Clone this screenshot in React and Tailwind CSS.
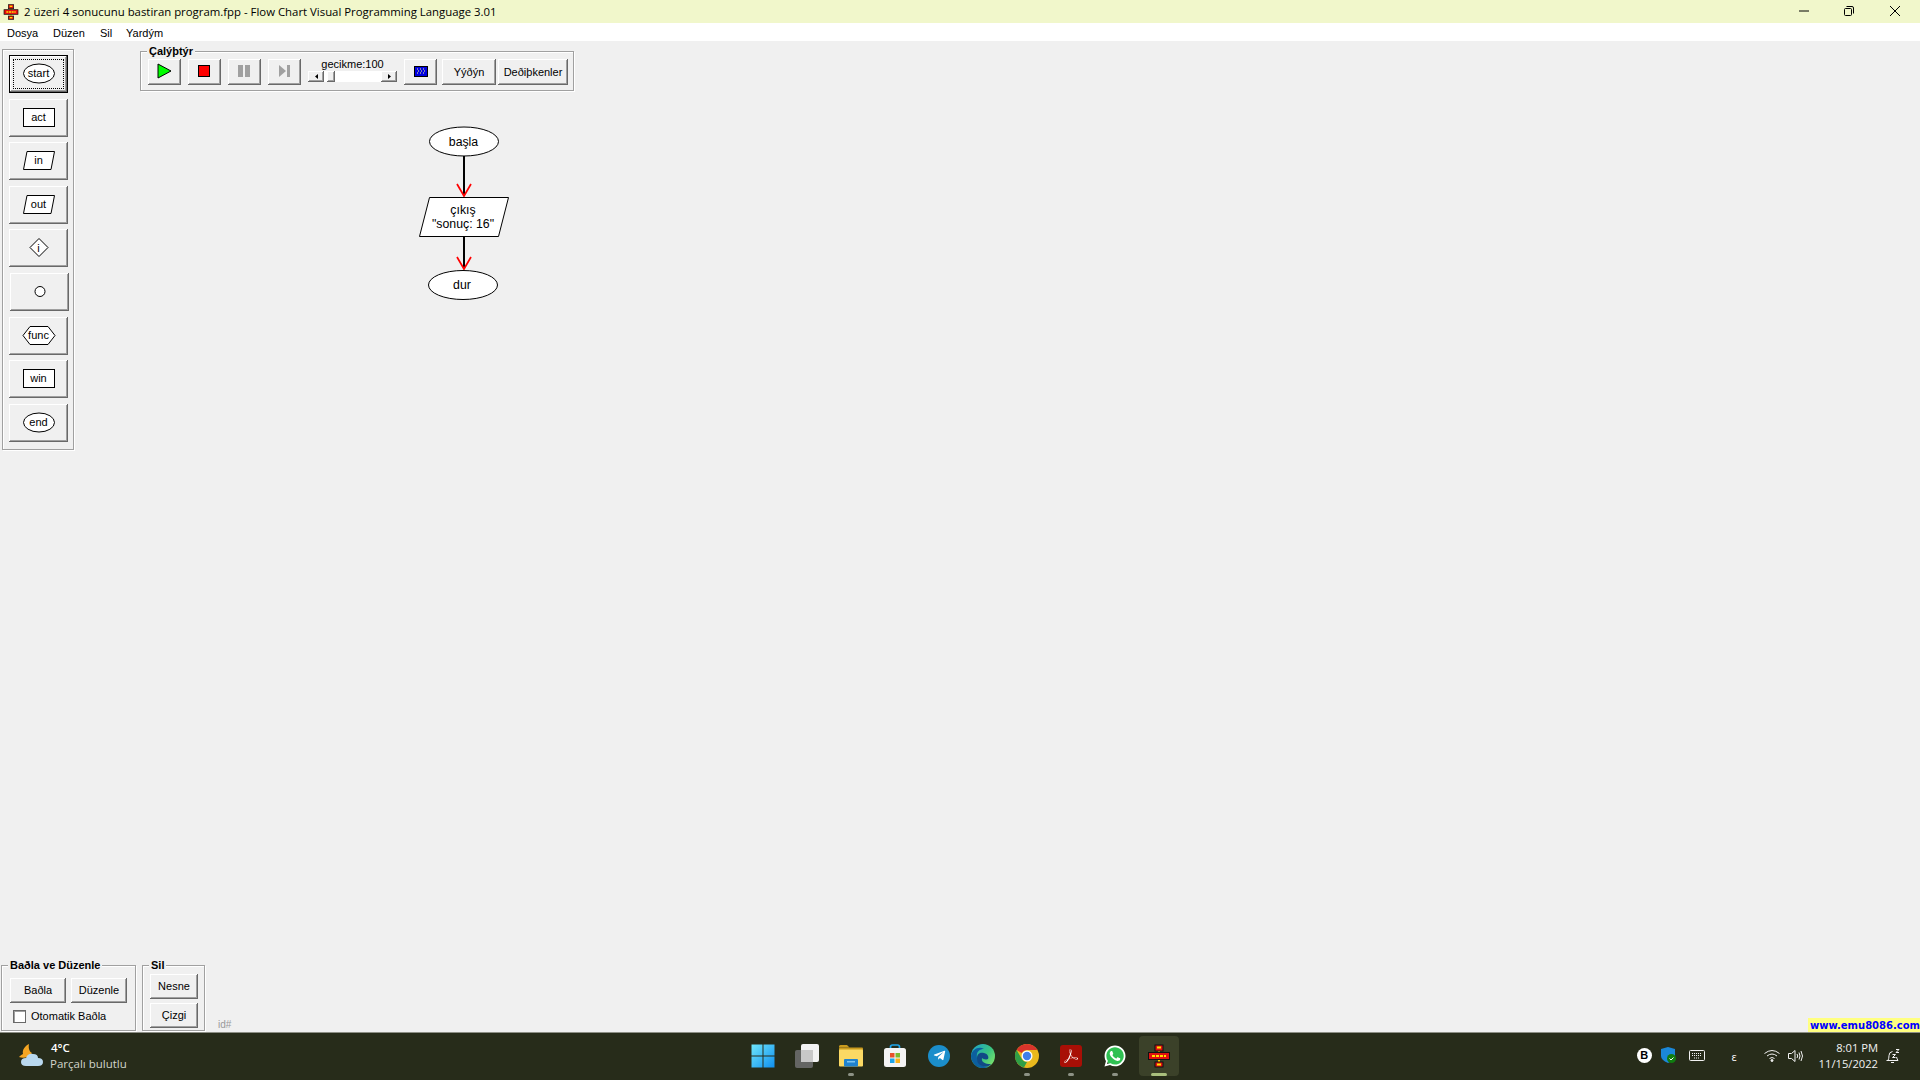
import { FaTelegramPlane, FaWhatsapp } from 'react-icons/fa';
import { SiAdobeacrobatreader } from 'react-icons/si';

const win = "font-['Liberation_Sans',Arial,sans-serif] text-[11px] text-black";
const raised = "bg-[#f0f0f0] shadow-[inset_-1px_-1px_0_#696969,inset_1px_1px_0_#fff,inset_-2px_-2px_0_#a0a0a0,inset_2px_2px_0_#f0f0f0]";

function Btn({ className = '', children }) {
  return <div className={`flex items-center justify-center ${raised} ${win} ${className}`}>{children}</div>;
}

function Group({ title, className = '', children }) {
  return (
    <div className={`relative border border-[#a0a0a0] shadow-[1px_1px_0_#fff,inset_1px_1px_0_#fff] ${className}`}>
      {title && (
        <span className="absolute left-[6px] -top-[8px] bg-[#f0f0f0] px-[2px] font-['Liberation_Sans',Arial,sans-serif] text-[11px] font-bold leading-[14px] text-black">
          {title}
        </span>
      )}
      {children}
    </div>
  );
}

function ToolShape({ type, label }) {
  const shapes = {
    ellipse: <ellipse cx="17" cy="10.5" rx="15.5" ry="9.5" fill="#fff" stroke="#000" />,
    rect: <rect x="1.5" y="1.5" width="31" height="18" fill="#fff" stroke="#000" />,
    para: <polygon points="5,1.5 32.5,1.5 29,19.5 1.5,19.5" fill="#fff" stroke="#000" />,
    diamond: <polygon points="17,1.5 26,10.5 17,19.5 8,10.5" fill="#fff" stroke="#000" />,
    circle: <circle cx="17" cy="10.5" r="5" fill="#fff" stroke="#000" />,
    hex: <polygon points="1,10.5 8,1.5 26,1.5 33,10.5 26,19.5 8,19.5" fill="#fff" stroke="#000" />,
  };
  return (
    <div className="relative flex h-[21px] w-[34px] items-center justify-center">
      <svg className="absolute inset-0" width="34" height="21">{shapes[type]}</svg>
      <span className={`relative ${win}`}>{label}</span>
    </div>
  );
}

const tools = [
  { type: 'ellipse', label: 'start' },
  { type: 'rect', label: 'act' },
  { type: 'para', label: 'in' },
  { type: 'para', label: 'out' },
  { type: 'diamond', label: 'i' },
  { type: 'circle', label: '' },
  { type: 'hex', label: 'func' },
  { type: 'rect', label: 'win' },
  { type: 'ellipse', label: 'end' },
];

function Toolbox() {
  return (
    <Group className="h-[401px] w-[72px] shrink-0">
      <div className="flex flex-col gap-[5.6px] pl-[6px] pt-[5px]">
        {tools.map((t, i) => (
          <Btn
            key={t.label + i}
            className={`relative h-[38px] w-[59px] pb-px ${i === 5 ? 'ml-px' : ''} ${i === 0 ? 'border border-black' : ''}`}
          >
            {i === 0 && <span className="absolute inset-[3px] border border-dotted border-black" />}
            <ToolShape type={t.type} label={t.label} />
          </Btn>
        ))}
      </div>
    </Group>
  );
}

function ScrollArrow({ dir }) {
  return (
    <svg width="3" height="5" viewBox="0 0 3 5">
      <polygon points={dir === 'left' ? '3,0 0,2.5 3,5' : '0,0 3,2.5 0,5'} fill="#000" />
    </svg>
  );
}

function RunBar() {
  return (
    <Group title="Çalýþtýr" className="ml-[66px] mt-[2px] h-[40px] w-[434px] shrink-0">
      <div className="flex items-start pl-[7px] pt-[7px]">
        <Btn className="h-[26px] w-[33px] pb-[2px] pr-[2px]">
          <svg width="16" height="16"><polygon points="2,1 15,8 2,15" fill="#00ff00" stroke="#000" /></svg>
        </Btn>
        <Btn className="ml-[7px] h-[26px] w-[33px] pb-[2px] pr-[2px]">
          <svg width="14" height="14"><rect x="1.5" y="1.5" width="11" height="11" fill="#ff0000" stroke="#000" /></svg>
        </Btn>
        <Btn className="ml-[7px] h-[26px] w-[33px] pb-[2px] pr-[2px]">
          <svg width="14" height="14"><rect x="1" y="1" width="5" height="12" fill="#a0a0a0" /><rect x="8" y="1" width="5" height="12" fill="#a0a0a0" /></svg>
        </Btn>
        <Btn className="ml-[7px] h-[26px] w-[33px] pb-[2px]">
          <svg width="14" height="14"><polygon points="1,1 8,7 1,13" fill="#a0a0a0" /><rect x="9" y="1" width="3" height="12" fill="#a0a0a0" /></svg>
        </Btn>
        <div className="ml-[7px] flex w-[89px] flex-col items-center">
          <span className={`${win} -mt-[2px] h-[14px] leading-[14px]`}>gecikme:100</span>
          <div className="flex h-[11px] w-full bg-white">
            <Btn className="h-[11px] w-[16px]"><ScrollArrow dir="left" /></Btn>
            <Btn className="ml-[3px] h-[11px] w-[8px]" />
            <div className="flex-1" />
            <Btn className="h-[11px] w-[16px]"><ScrollArrow dir="right" /></Btn>
          </div>
        </div>
        <Btn className="ml-[7px] h-[26px] w-[33px] pb-[2px]">
          <svg width="14" height="11">
            <rect x="0.5" y="0.5" width="13" height="10" fill="#0000e0" stroke="#000" />
            <path d="M3 3h1M6 3h1M9 3h1M4 5h1M7 5h1M10 5h1M3 7h1M6 7h1M9 7h1" stroke="#ffff80" strokeWidth="1" />
          </svg>
        </Btn>
        <Btn className="ml-[5px] h-[26px] w-[54px]">Yýðýn</Btn>
        <Btn className="ml-[2px] h-[26px] w-[70px]">Deðiþkenler</Btn>
      </div>
    </Group>
  );
}

function FlowChart() {
  const txt = { fontFamily: 'Liberation Sans, Arial, sans-serif', fontSize: 12.3, textAnchor: 'middle', fill: '#000' };
  return (
    <svg className="absolute left-[410px] top-[80px]" width="110" height="190" viewBox="410 121 110 190">
      <path d="M464 156V196M464 236V268" stroke="#000" strokeWidth="2" />
      <path d="M457 184L464 196L471 184M457 257L464 269L471 257" stroke="#f00" strokeWidth="1.7" fill="none" />
      <ellipse cx="464" cy="141.5" rx="34.5" ry="14.5" fill="#fff" stroke="#000" />
      <polygon points="429.5,197.5 508.5,197.5 498.5,236.5 419.5,236.5" fill="#fff" stroke="#000" />
      <ellipse cx="463" cy="285" rx="34.5" ry="14.5" fill="#fff" stroke="#000" />
      <text x="463.5" y="146" style={txt}>başla</text>
      <text x="463" y="214" style={txt}>çıkış</text>
      <text x="463" y="228" style={txt}>"sonuç: 16"</text>
      <text x="462" y="289" style={txt}>dur</text>
    </svg>
  );
}

function BottomPanels() {
  return (
    <div className="flex items-end pb-[1px] pl-[1px]">
      <Group title="Baðla ve Düzenle" className="h-[66px] w-[135px] shrink-0">
        <div className="flex gap-[5px] pl-[8px] pt-[12px]">
          <Btn className="h-[25px] w-[56px]">Baðla</Btn>
          <Btn className="h-[25px] w-[56px]">Düzenle</Btn>
        </div>
        <div className="flex items-center pl-[11px] pt-[7px]">
          <span className="h-[13px] w-[13px] border border-[#696969] bg-white shadow-[inset_1px_1px_0_#a0a0a0]" />
          <span className={`${win} ml-[5px] text-[10.7px] leading-[13px]`}>Otomatik Baðla</span>
        </div>
      </Group>
      <Group title="Sil" className="ml-[6px] h-[66px] w-[63px] shrink-0">
        <div className="flex flex-col gap-[4px] pl-[7px] pt-[8px]">
          <Btn className="h-[25px] w-[48px]">Nesne</Btn>
          <Btn className="h-[25px] w-[48px]">Çizgi</Btn>
        </div>
      </Group>
      <span className="ml-[13px] font-['Liberation_Sans',Arial,sans-serif] text-[10px] leading-[12px] text-[#999]">id#</span>
      <span className="ml-auto -mb-px bg-[#ffff80] pl-[2px] pt-px font-['DejaVu_Sans',Verdana,sans-serif] text-[10px] font-bold leading-[13px] text-[#0000ff]">
        www.emu8086.com
      </span>
    </div>
  );
}

function AppIcon({ size = 24 }) {
  return (
    <svg width={size} height={size} viewBox="0 0 24 24">
      <path d="M12 2V22" stroke="#ffd000" strokeWidth="2" />
      <rect x="8" y="1" width="8" height="6" fill="#e01010" stroke="#111" />
      <rect x="1.5" y="8.5" width="21" height="7" fill="#e01010" stroke="#111" />
      <path d="M5 12H19" stroke="#ffe000" strokeWidth="2" strokeDasharray="3 1" />
      <rect x="8" y="18" width="8" height="5" fill="#e01010" stroke="#111" />
      <rect x="10" y="19.5" width="4" height="2" fill="#ffe000" />
      <rect x="10" y="2.5" width="4" height="2" fill="#ffe000" />
    </svg>
  );
}

const WindowsIcon = () => (
  <svg width="24" height="24" viewBox="0 0 24 24">
    <defs>
      <linearGradient id="wg" x1="0" y1="0" x2="1" y2="1"><stop offset="0" stopColor="#6fe6fb" /><stop offset="1" stopColor="#0f8fef" /></linearGradient>
    </defs>
    <path d="M0.5 0.5H11.5V11.5H0.5ZM12.5 0.5H23.5V11.5H12.5ZM0.5 12.5H11.5V23.5H0.5ZM12.5 12.5H23.5V23.5H12.5Z" fill="url(#wg)" />
  </svg>
);

const TaskViewIcon = () => (
  <svg width="24" height="24" viewBox="0 0 24 24">
    <rect x="6" y="0" width="18" height="18" rx="2" fill="#f2f2f2" />
    <rect x="0" y="6" width="18" height="18" rx="2" fill="#6c6c6c" fillOpacity="0.9" />
    <rect x="6" y="6" width="12" height="12" fill="#c8c8c8" />
  </svg>
);

const FolderIcon = () => (
  <svg width="24" height="24" viewBox="0 0 24 24">
    <path d="M0 2.5Q0 1 1.5 1H8L10.5 3.5H0Z" fill="#c99a1e" />
    <rect x="0" y="3.5" width="24" height="18" rx="1" fill="#c99a1e" />
    <rect x="0" y="5.5" width="24" height="17" rx="1" fill="#fbd964" />
    <rect x="5" y="15" width="14" height="7.5" rx="1" fill="#1f82cf" />
    <rect x="8" y="17" width="8" height="1.5" fill="#7cc4f0" />
  </svg>
);

const StoreIcon = () => (
  <svg width="24" height="24" viewBox="0 0 24 24">
    <path d="M7.5 5V3Q7.5 1 9.5 1H14.5Q16.5 1 16.5 3V5" fill="none" stroke="#1ea5ea" strokeWidth="1.7" />
    <rect x="1" y="4" width="22" height="19" rx="2.5" fill="#f4f4f4" />
    <rect x="7" y="9" width="4.5" height="4.5" fill="#e8512a" />
    <rect x="12.5" y="9" width="4.5" height="4.5" fill="#7cba2e" />
    <rect x="7" y="14.5" width="4.5" height="4.5" fill="#1ea5ea" />
    <rect x="12.5" y="14.5" width="4.5" height="4.5" fill="#fbb21b" />
  </svg>
);

const TelegramIcon = () => (
  <div className="flex h-[22px] w-[22px] items-center justify-center rounded-full bg-[#1b8ecb]">
    <FaTelegramPlane className="text-white" size={13} />
  </div>
);

const EdgeIcon = () => (
  <svg width="24" height="24" viewBox="0 0 24 24">
    <defs>
      <linearGradient id="eg" x1="0" y1="0" x2="1" y2="0.8"><stop offset="0" stopColor="#1ca0cf" /><stop offset="0.6" stopColor="#39c481" /><stop offset="1" stopColor="#7fe36a" /></linearGradient>
    </defs>
    <circle cx="12" cy="12" r="12" fill="url(#eg)" />
    <path d="M0 12C1 5 8 2 13 5C8 5 5 8 6 14C7 20 13 24 18 22C15 25 8 25 4 21C1 18 0 15 0 12Z" fill="#0c5f9e" />
    <path d="M6 14C6 9 10 8 13 9C17 10 18 13 17 15C15 16 12 15 11 14C10 18 14 20 20 20C17 24 10 23 7 19C6 17 6 15 6 14Z" fill="#114a86" />
  </svg>
);

const ChromeIcon = () => (
  <svg width="24" height="24" viewBox="0 0 24 24">
    <circle cx="12" cy="12" r="12" fill="#e9b91d" />
    <path d="M12 0A12 12 0 0 1 22.4 6H12A6 6 0 0 0 6.8 9L1.6 6A12 12 0 0 1 12 0Z" fill="#d9342b" />
    <path d="M1.6 6L6.8 15A6 6 0 0 0 12 18L9 23.6A12 12 0 0 1 1.6 6Z" fill="#2f9e46" />
    <circle cx="12" cy="12" r="5.5" fill="#fff" />
    <circle cx="12" cy="12" r="4.2" fill="#3f7fe8" />
  </svg>
);

const AcrobatIcon = () => (
  <div className="flex h-[22px] w-[22px] items-center justify-center rounded-[3px] bg-[#a80f06]">
    <SiAdobeacrobatreader className="text-white" size={14} />
  </div>
);

const WhatsappIcon = () => (
  <div className="relative flex h-[24px] w-[24px] items-center justify-center">
    <span className="absolute inset-[2px] rounded-full bg-[#2fc052]" />
    <FaWhatsapp className="relative text-white" size={24} />
  </div>
);

function TaskItem({ active, running, children }) {
  return (
    <div className={`relative flex h-[40px] w-[40px] items-center justify-center rounded-[4px] ${active ? 'bg-[#3b4129]' : ''}`}>
      {children}
      {running && <span className={`absolute bottom-0 left-1/2 h-[3px] -translate-x-1/2 rounded-full ${active ? 'w-[16px] bg-[#a9bf7d]' : 'w-[6px] bg-[#8d9285]'}`} />}
    </div>
  );
}

function Weather() {
  return (
    <div className="flex items-center pl-[19px]">
      <svg width="25" height="24" viewBox="0 0 25 24">
        <path d="M10 0C6 2 3 6 4 10C2 11 1 12 0 13C5 15 10 13 13 9C11 8 9 5 10 0Z" fill="#f5a623" />
        <path d="M7 22Q2 22 2 18Q2 14 7 14Q9 9 14 10Q19 10 19 14Q24 14 24 18Q24 22 19 22Z" fill="#b9d8ee" />
      </svg>
      <div className="ml-[7px] flex flex-col font-['Open_Sans',sans-serif] text-[11.5px] leading-[16px]">
        <span className="font-semibold text-white">4°C</span>
        <span className="-ml-px text-[#d2d4cb]">Parçalı bulutlu</span>
      </div>
    </div>
  );
}

function Tray() {
  return (
    <div className="flex items-center justify-end text-[#f2f2f2]">
      <span className="flex h-[15px] w-[15px] items-center justify-center rounded-full bg-white font-['Liberation_Sans',sans-serif] text-[11px] font-bold text-black">B</span>
      <svg className="ml-[9px]" width="16" height="17" viewBox="0 0 16 17">
        <path d="M7 0L14 2V9Q14 13 7 16Q0 13 0 9V2Z" fill="#1b87d8" />
        <circle cx="10.5" cy="11.5" r="4.5" fill="#107c10" />
        <path d="M8.5 11.5L10 13L12.5 10.5" stroke="#fff" fill="none" />
      </svg>
      <svg className="ml-[12px]" width="16" height="12" viewBox="0 0 16 12">
        <rect x="0.5" y="0.5" width="15" height="10" rx="1" fill="none" stroke="#f2f2f2" />
        <path d="M3 3.5H13M3 5.5H13M5 8H11" stroke="#f2f2f2" strokeDasharray="1 1" fill="none" />
      </svg>
      <span className="ml-[27px] mt-[4px] w-[14px] font-['Noto_Sans',sans-serif] text-[11px]">ε</span>
      <svg className="ml-[18px]" width="16" height="13" viewBox="0 0 16 13" fill="none" stroke="#f2f2f2" strokeWidth="1">
        <path d="M0.5 4.5Q8 -1.5 15.5 4.5M3 7Q8 3 13 7M5.5 9.5Q8 7.5 10.5 9.5" />
        <circle cx="8" cy="11.5" r="1" fill="#f2f2f2" />
      </svg>
      <svg className="ml-[8px]" width="16" height="14" viewBox="0 0 16 14" fill="none" stroke="#f2f2f2" strokeWidth="1">
        <path d="M0.5 4.5H3.5L7 1.5V12.5L3.5 9.5H0.5Z" />
        <path d="M9 5Q10.5 7 9 9M11 3.5Q13 7 11 10.5M13 2Q16 7 13 12" />
      </svg>
      <div className="ml-[15px] flex flex-col items-end font-['Open_Sans',sans-serif] text-[11.2px] leading-[16px]">
        <span>8:01 PM</span>
        <span>11/15/2022</span>
      </div>
      <div className="relative ml-[8px] mr-[20px] h-[16px] w-[14px]">
        <svg width="14" height="16" viewBox="0 0 14 16" fill="none" stroke="#f2f2f2">
          <path d="M2 12.5Q3 10.5 3 7.5Q3 4 6.5 3.5M10.5 9Q11 11 12 12.5H0.5M5 14.5H8" />
          <path d="M6.5 6.5H9.5L6.5 9.5H9.5" />
          <path d="M10 1.5H13L10 4.5H13" />
        </svg>
      </div>
    </div>
  );
}

export default function App() {
  return (
    <div className="flex h-screen w-screen flex-col overflow-hidden bg-[#f0f0f0]">
      <div className="flex h-[23px] shrink-0 items-center bg-[#f1f7cb]">
        <div className="ml-[3px]"><AppIcon size={16} /></div>
        <span className="ml-[5px] font-['Open_Sans',sans-serif] text-[11.38px] text-black">
          2 üzeri 4 sonucunu bastiran program.fpp - Flow Chart Visual Programming Language 3.01
        </span>
        <div className="ml-auto flex items-center pb-[2px] pr-[20px]">
          <svg width="10" height="10" viewBox="0 0 10 10"><path d="M0 5H10" stroke="#000" /></svg>
          <svg className="ml-[35px]" width="10" height="10" viewBox="0 0 10 10" fill="none" stroke="#000">
            <rect x="0.5" y="2.5" width="7" height="7" rx="1" /><path d="M2.5 0.5H8Q9.5 0.5 9.5 2V7.5" />
          </svg>
          <svg className="ml-[36px]" width="10" height="10" viewBox="0 0 10 10" stroke="#000"><path d="M0 0L10 10M10 0L0 10" /></svg>
        </div>
      </div>
      <div className={`flex h-[18px] shrink-0 items-center bg-white pl-[7px] pt-[2px] ${win} text-[11.5px] text-[#222]`}>
        <span className="w-[46px]">Dosya</span>
        <span className="w-[47px]">Düzen</span>
        <span className="w-[26px]">Sil</span>
        <span>Yardým</span>
      </div>
      <div className="relative flex min-h-0 flex-1 flex-col justify-between">
        <div className="flex items-start pl-[2px] pt-[8px]">
          <Toolbox />
          <RunBar />
        </div>
        <FlowChart />
        <BottomPanels />
      </div>
      <div className="grid h-[48px] shrink-0 grid-cols-[1fr_auto_1fr] items-center border-t border-[#8d8f86] bg-[#272c1a] pb-[2px]">
        <Weather />
        <div className="flex items-center gap-[4px] pl-[2px]">
          <TaskItem><WindowsIcon /></TaskItem>
          <TaskItem><TaskViewIcon /></TaskItem>
          <TaskItem running><FolderIcon /></TaskItem>
          <TaskItem><StoreIcon /></TaskItem>
          <TaskItem><TelegramIcon /></TaskItem>
          <TaskItem><EdgeIcon /></TaskItem>
          <TaskItem running><ChromeIcon /></TaskItem>
          <TaskItem running><AcrobatIcon /></TaskItem>
          <TaskItem running><WhatsappIcon /></TaskItem>
          <TaskItem active running><AppIcon /></TaskItem>
        </div>
        <Tray />
      </div>
    </div>
  );
}
